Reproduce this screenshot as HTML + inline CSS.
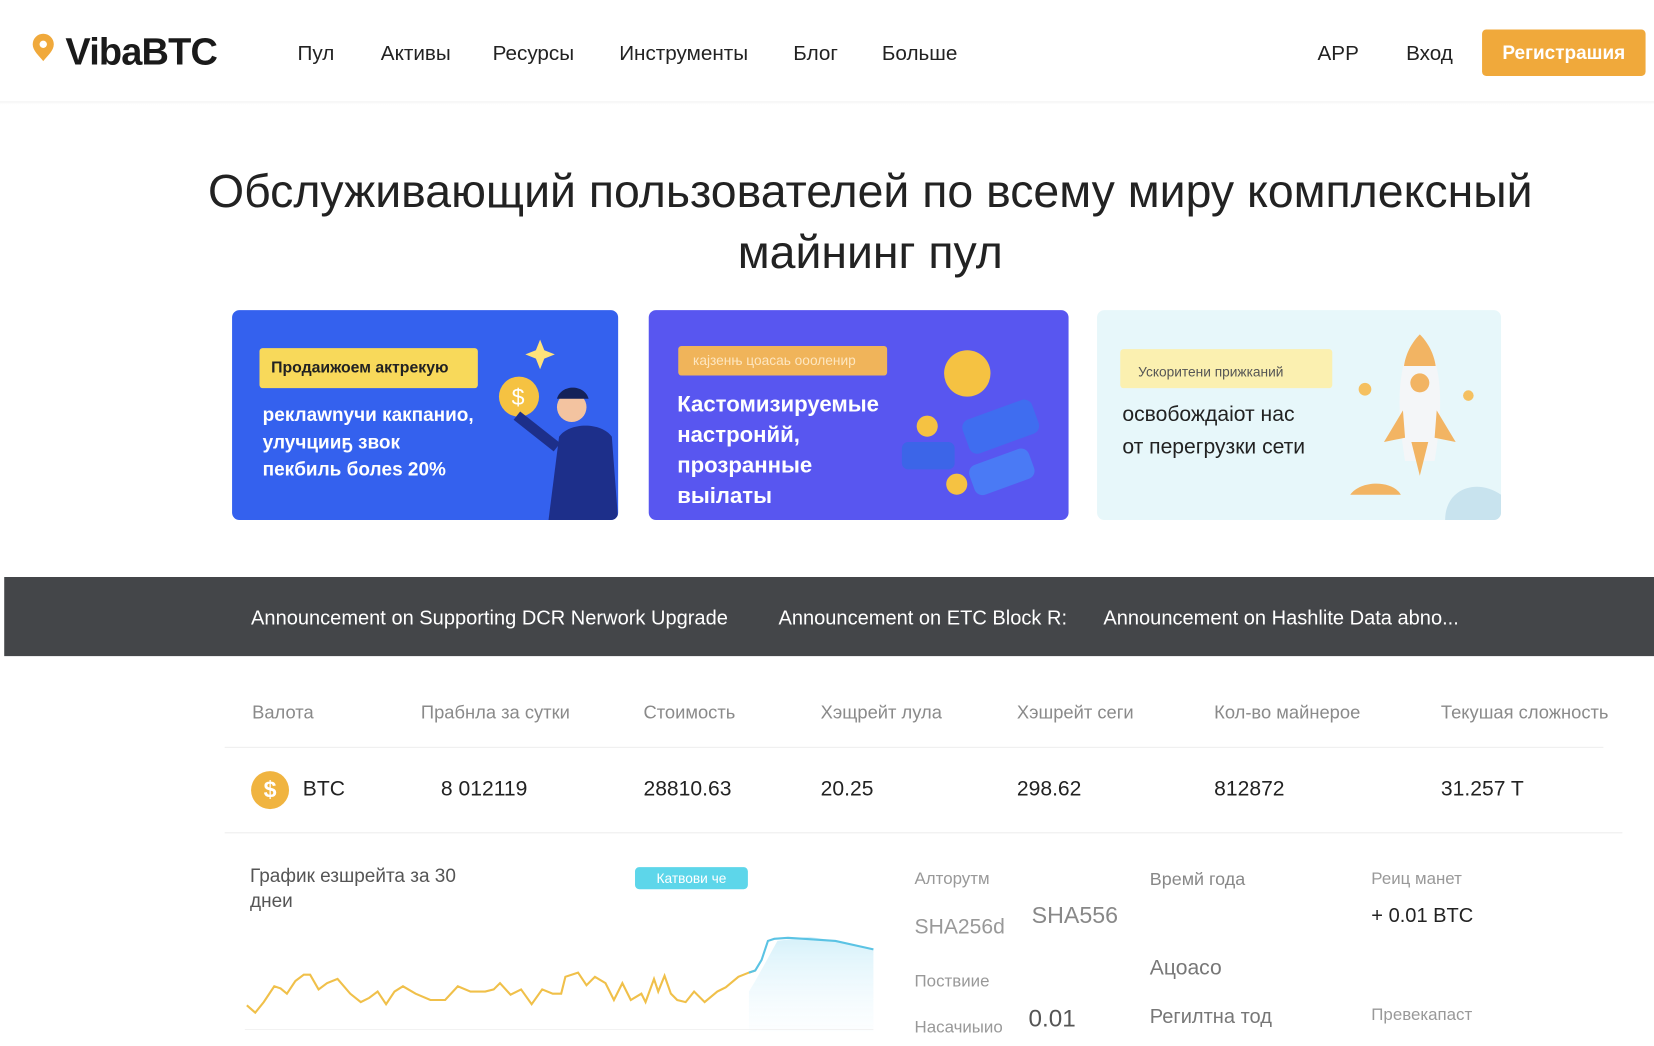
<!DOCTYPE html>
<html><head><meta charset="utf-8"><style>
html,body{margin:0;padding:0;width:1654px;height:1046px;overflow:hidden;background:#fff}
#w{position:absolute;left:0;top:0;width:1568px;height:992px;transform:scale(1.05485);transform-origin:0 0;font-family:"Liberation Sans","DejaVu Sans",sans-serif;color:#222}
.a{position:absolute;white-space:nowrap}
.nav{font-size:19.6px;color:#222;top:40px}
.card{position:absolute;border-radius:7px;overflow:hidden}
.th{top:665px;font-size:17.4px;color:#8a8a8a}
.td{top:737px;font-size:20px;color:#222}
.g{font-size:16px;color:#999}
</style></head><body><div id="w">
<div class="a" style="left:0;top:96px;width:1568px;height:3px;background:linear-gradient(#f3f3f3,#fff)"></div>
<svg class="a" style="left:29px;top:30px" width="24" height="30" viewBox="0 0 24 30"><path d="M12 2a10 10 0 0 1 10 10c0 6-6 11-10 16C8 23 2 18 2 12A10 10 0 0 1 12 2z" fill="#f0a93b"/><circle cx="12" cy="12" r="3.5" fill="#fff"/></svg>
<div class="a" style="left:62px;top:28px;font-size:36px;font-weight:bold;color:#1a1a1a;letter-spacing:-0.8px">VibaBTC</div>
<div class="a nav" style="left:282px">Пул</div>
<div class="a nav" style="left:361px">Активы</div>
<div class="a nav" style="left:467px">Ресурсы</div>
<div class="a nav" style="left:587px">Инструменты</div>
<div class="a nav" style="left:752px">Блог</div>
<div class="a nav" style="left:836px">Больше</div>
<div class="a nav" style="left:1249px">APP</div>
<div class="a nav" style="left:1333px">Вход</div>
<div class="a" style="left:1405px;top:28px;width:155px;height:44px;background:#f0a93b;border-radius:4px;color:#fff;font-size:18px;font-weight:bold;line-height:44px;text-align:center">Регистрашия</div>

<div class="a" style="left:0;width:1650px;text-align:center;top:153px;font-size:44px;line-height:58px;color:#222">Обслуживающий пользователей по всему миру комплексный<br>майнинг пул</div>

<div class="card" style="left:220px;top:294px;width:366px;height:199px;background:#3461ee">
 <div class="a" style="left:26px;top:36px;width:207px;height:38px;background:#f8d95a;border-radius:3px;font-size:15px;font-weight:bold;line-height:38px;text-indent:11px;color:#222">Продаижоем актрекую</div>
 <div class="a" style="left:29px;top:86px;font-size:18px;font-weight:bold;color:#fff;line-height:26px">реклаwnyчи какпанио,<br>улучцииҕ звок<br>пекбиль болes 20%</div>
 <svg class="a" style="left:250px;top:20px" width="116" height="179"><path d="M42 8l4 10 10 4-10 4-4 10-4-10-10-4 10-4z" fill="#ffe27a"/><circle cx="22" cy="62" r="19" fill="#f5c242"/><text x="15" y="70" font-size="22" fill="#fff" font-family="Liberation Sans">$</text><path d="M60 100c10-14 40-14 50 0l6 79H50z" fill="#1d2f8a"/><circle cx="72" cy="72" r="14" fill="#f3c3a0"/><path d="M58 64c4-14 26-14 30 0z" fill="#142259"/><path d="M20 80l38 30" stroke="#1d2f8a" stroke-width="10"/></svg>
</div>
<div class="card" style="left:615px;top:294px;width:398px;height:199px;background:#5856f0">
 <div class="a" style="left:28px;top:34px;width:198px;height:28px;background:#f0b45a;border-radius:3px;font-size:13px;line-height:28px;text-indent:14px;color:#fde6c0">кајзенњ цоасаь оооленир</div>
 <div class="a" style="left:27px;top:75px;font-size:21px;font-weight:bold;color:#fff;line-height:29px">Кастомизируемые<br>настронйй,<br>прозранные<br>выiлаты</div>
 <svg class="a" style="left:230px;top:25px" width="150" height="170"><circle cx="72" cy="35" r="22" fill="#f5c242"/><rect x="70" y="70" width="70" height="34" rx="8" fill="#3f6df0" transform="rotate(-20 100 90)"/><rect x="75" y="115" width="60" height="30" rx="8" fill="#4a7af5" transform="rotate(-20 100 130)"/><circle cx="34" cy="85" r="10" fill="#f5c242"/><circle cx="62" cy="140" r="10" fill="#f5c242"/><rect x="10" y="100" width="50" height="26" rx="6" fill="#3c65e8"/></svg>
</div>
<div class="card" style="left:1040px;top:294px;width:383px;height:199px;background:#e7f7fa">
 <div class="a" style="left:22px;top:37px;width:201px;height:37px;background:#fbf0b0;border-radius:3px;font-size:13px;line-height:44px;text-indent:17px;color:#555">Ускоритени прижканий</div>
 <div class="a" style="left:24px;top:84px;font-size:20px;color:#222;line-height:31px">освобождаiот нас<br>от перегрузки сети</div>
 <svg class="a" style="left:240px;top:15px" width="143" height="184"><path d="M66 8c20 20 24 60 14 120H52C42 68 46 28 66 8z" fill="#f4f6f8"/><path d="M66 8c10 10 14 22 15 30H51c1-8 5-20 15-30z" fill="#f2b463"/><circle cx="66" cy="54" r="9" fill="#f2b463"/><path d="M50 80l-18 30 20-4zM82 80l18 30-20-4z" fill="#f2b463"/><path d="M58 110h16l-8 32z" fill="#f2b463"/><circle cx="14" cy="60" r="6" fill="#f5c060"/><circle cx="112" cy="66" r="5" fill="#f5c060"/><path d="M0 160c10-14 40-14 48 0z" fill="#f2b463"/><path d="M90 184c0-30 30-40 53-24v24z" fill="#c8e3ee"/></svg>
</div>

<div class="a" style="left:4px;top:547px;width:1564px;height:75px;background:#444649"></div>
<div class="a" style="left:238px;top:576px;font-size:19px;color:#fff">Announcement on Supporting DCR Nerwork Upgrade</div>
<div class="a" style="left:738px;top:576px;font-size:19px;color:#fff">Announcement on ETC Block R:</div>
<div class="a" style="left:1046px;top:576px;font-size:19px;color:#fff">Announcement on Hashlite Data abno...</div>

<div class="a th" style="left:239px">Валота</div>
<div class="a th" style="left:399px">Прабнла за сутки</div>
<div class="a th" style="left:610px">Стоимость</div>
<div class="a th" style="left:778px">Хэщрейт лула</div>
<div class="a th" style="left:964px">Хэшрейт сеги</div>
<div class="a th" style="left:1151px">Кол-во майнерое</div>
<div class="a th" style="left:1366px">Текушая сложность</div>
<div class="a" style="left:213px;top:708px;width:1307px;height:1px;background:#eee"></div>
<div class="a" style="left:238px;top:731px;width:36px;height:36px;border-radius:50%;background:#f0b440;color:#fff;font-size:22px;font-weight:bold;text-align:center;line-height:36px">$</div>
<div class="a td" style="left:287px">BTC</div>
<div class="a td" style="left:418px">8 012119</div>
<div class="a td" style="left:610px">28810.63</div>
<div class="a td" style="left:778px">20.25</div>
<div class="a td" style="left:964px">298.62</div>
<div class="a td" style="left:1151px">812872</div>
<div class="a td" style="left:1366px">31.257 T</div>
<div class="a" style="left:213px;top:789px;width:1325px;height:1px;background:#eee"></div>

<div class="a" style="left:237px;top:818px;font-size:18px;color:#555;line-height:24px">График езшрейта за 30<br>днеи</div>
<div class="a" style="left:602px;top:822px;width:107px;height:21px;background:#5dd6ea;border-radius:4px;color:#fff;font-size:13px;text-align:center;line-height:21px">Катвови чe</div>
<svg class="a" style="left:232px;top:880px" width="600" height="100"><defs><linearGradient id="f" x1="0" y1="0" x2="0" y2="1"><stop offset="0" stop-color="#d6f1fa"/><stop offset="1" stop-color="#f6fcff" stop-opacity=".3"/></linearGradient></defs><path d="M478 60L484 50 505 12 535 8 560 12 596 20V98H478z" fill="url(#f)"/><path d="M2 73L10 80 18 70 28 55 34 57 40 62 48 50 56 44 62 44 70 58 78 52 88 48 100 62 110 70 118 66 126 60 134 72 142 60 150 55 162 62 176 68 190 68 202 55 214 60 228 60 236 58 242 52 252 63 262 58 272 72 282 58 292 62 300 62 304 46 316 42 324 54 332 46 342 52 350 68 358 52 366 68 376 62 380 70 388 48 392 60 398 45 404 62 410 68 418 70 426 60 436 70 448 60 456 56 468 46 478 42 484 40" fill="none" stroke="#f0c04a" stroke-width="2"/><path d="M478 42L484 40 490 30 496 12 502 10 515 9 530 10 560 12 596 20" fill="none" stroke="#5bc3e4" stroke-width="2"/><line x1="0" y1="96" x2="596" y2="96" stroke="#f2f2f2"/></svg>

<div class="a g" style="left:867px;top:825px">Алторутм</div>
<div class="a" style="left:867px;top:868px;font-size:20px;color:#999">SHA256d</div>
<div class="a" style="left:978px;top:855px;font-size:22px;color:#888">SHA556</div>
<div class="a g" style="left:867px;top:922px">Поствиие</div>
<div class="a g" style="left:867px;top:966px">Насачиыио</div>
<div class="a" style="left:975px;top:952px;font-size:23px;color:#555">0.01</div>
<div class="a" style="left:1090px;top:824px;font-size:17px;color:#888">Времй года</div>
<div class="a" style="left:1090px;top:907px;font-size:20px;color:#777">Ацоасо</div>
<div class="a" style="left:1090px;top:954px;font-size:19px;color:#777">Регилтна тод</div>
<div class="a g" style="left:1300px;top:825px">Реиц манет</div>
<div class="a" style="left:1300px;top:858px;font-size:19px;color:#222">+ 0.01 BTC</div>
<div class="a g" style="left:1300px;top:954px">Превекапаст</div>
</div></body></html>
